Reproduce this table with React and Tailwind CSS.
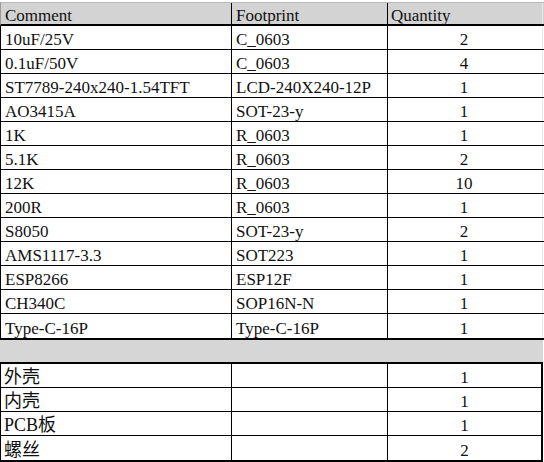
import React from 'react';

const parts = [
    { comment: '10uF/25V', footprint: 'C_0603', qty: 2 },
    { comment: '0.1uF/50V', footprint: 'C_0603', qty: 4 },
    { comment: 'ST7789-240x240-1.54TFT', footprint: 'LCD-240X240-12P', qty: 1 },
    { comment: 'AO3415A', footprint: 'SOT-23-y', qty: 1 },
    { comment: '1K', footprint: 'R_0603', qty: 1 },
    { comment: '5.1K', footprint: 'R_0603', qty: 2 },
    { comment: '12K', footprint: 'R_0603', qty: 10 },
    { comment: '200R', footprint: 'R_0603', qty: 1 },
    { comment: 'S8050', footprint: 'SOT-23-y', qty: 2 },
    { comment: 'AMS1117-3.3', footprint: 'SOT223', qty: 1 },
    { comment: 'ESP8266', footprint: 'ESP12F', qty: 1 },
    { comment: 'CH340C', footprint: 'SOP16N-N', qty: 1 },
    { comment: 'Type-C-16P', footprint: 'Type-C-16P', qty: 1 }
];

const extras = [
    { comment: '外壳', qty: 1 },
    { comment: '内壳', qty: 1 },
    { comment: 'PCB板', qty: 1 },
    { comment: '螺丝', qty: 2 }
];

const App = () => {
    return (
        <div
            className="w-[544px] h-[462px] bg-white text-[#111] text-[17px] leading-none overflow-hidden pt-[2px]"
            style={{ fontFamily: '"Liberation Serif", "Noto Sans CJK SC", serif' }}
        >
            {/* header */}
            <div className="grid grid-cols-[231px_156px_155px] h-[24px] bg-[#d3d3d3] border-t border-t-[#b8b8b8] border-b-2 border-b-black border-l border-l-[#9a9a9a]">
                <div className="flex items-center pl-[4px] pt-[3px] border-r border-black">Comment</div>
                <div className="flex items-center pl-[4px] pt-[3px] border-r border-black">Footprint</div>
                <div className="flex items-center pl-[3px] pt-[3px] border-r border-[#e4e4e4]">Quantity</div>
            </div>

            {parts.map((p, i) => (
                <div
                    key={i}
                    className={
                        i === parts.length - 1
                            ? 'grid grid-cols-[231px_156px_155px] h-[26px] border-b-2 border-black border-l'
                            : 'grid grid-cols-[231px_156px_155px] h-[24px] border-b border-black border-l'
                    }
                >
                    <div className="flex items-center pl-[4px] pt-[4px] border-r border-black whitespace-nowrap">{p.comment}</div>
                    <div className="flex items-center pl-[4px] pt-[4px] border-r border-black whitespace-nowrap">{p.footprint}</div>
                    <div className="flex items-center justify-center pt-[4px] pr-[2px] border-r border-[#e8e8e8]">{p.qty}</div>
                </div>
            ))}

            {/* spacer band */}
            <div className="h-[24px] bg-[#d6d6d6] border-b-2 border-black w-[543px]"></div>

            {extras.map((e, i) => (
                <div
                    key={i}
                    className={
                        i === extras.length - 1
                            ? 'grid grid-cols-[231px_156px_154px] w-[543px] h-[26px] border-b-2 border-black border-l border-r-2'
                            : 'grid grid-cols-[231px_156px_154px] w-[543px] h-[24px] border-b border-black border-l border-r-2'
                    }
                >
                    <div className="flex items-center pl-[3px] pt-[3px] border-r border-black whitespace-nowrap text-[18px]">{e.comment}</div>
                    <div className="border-r border-black"></div>
                    <div className="flex items-center justify-center pt-[4px] pr-[1px]">{e.qty}</div>
                </div>
            ))}
        </div>
    );
};

export default App;
